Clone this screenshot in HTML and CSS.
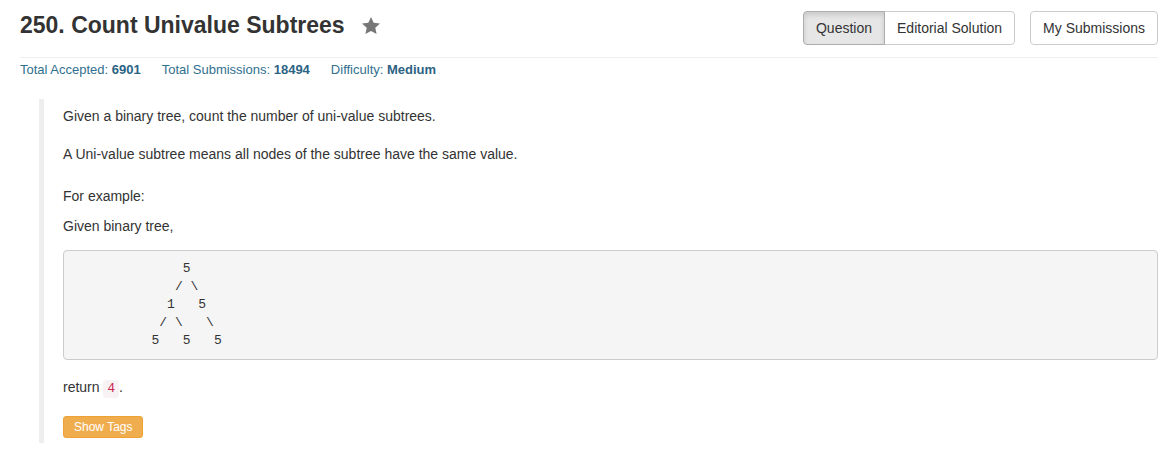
FILE: index.html
```html
<!DOCTYPE html>
<html>
<head>
<meta charset="utf-8">
<title>250. Count Univalue Subtrees</title>
<link rel="stylesheet" href="styles.css">
</head>
<body>
<div class="page">
  <div class="header">
    <h3 class="title">250. Count Univalue Subtrees
      <svg class="star" width="18" height="17" viewBox="1.5 1.5 21 20.2" preserveAspectRatio="none"><polygon points="12,1.5 15.1,8.3 22.5,9.2 17,14.3 18.5,21.7 12,18 5.5,21.7 7,14.3 1.5,9.2 8.9,8.3" fill="#777"/></svg>
    </h3>
    <div class="btn-group">
      <a class="btn active">Question</a><a class="btn">Editorial Solution</a>
    </div>
    <a class="btn solo">My Submissions</a>
  </div>
  <hr class="rule">
  <div class="stats">
    <span class="stat">Total Accepted: <b>6901</b></span>
    <span class="stat">Total Submissions: <b>18494</b></span>
    <span class="stat">Difficulty: <b>Medium</b></span>
  </div>
  <div class="question">
    <p class="p1">Given a binary tree, count the number of uni-value subtrees.</p>
    <p class="p2">A Uni-value subtree means all nodes of the subtree have the same value.</p>
    <p class="p3">For example:</p>
    <p class="p4">Given binary tree,</p>
<pre class="code-block">              5
             / \
            1   5
           / \   \
          5   5   5</pre>
    <p class="ret">return <code class="inline">4</code>.</p>
    <button class="tags-btn">Show Tags</button>
  </div>
</div>
</body>
</html>
```

FILE: styles.css
```css
* { box-sizing: border-box; }
html, body { margin: 0; padding: 0; background: #fff; }
body {
  font-family: "Liberation Sans", Arial, Helvetica, sans-serif;
  font-size: 14px;
  line-height: 20px;
  color: #333;
}
.page {
  padding: 0 13px 0 20px;
}
.header {
  display: flex;
  align-items: flex-start;
  padding-top: 11px;
}
.title {
  margin: 1px auto 0 0;
  font-size: 23px;
  line-height: 26px;
  font-weight: bold;
  color: #333;
  display: flex;
  align-items: center;
}
.star {
  margin-left: 17px;
}
.btn-group {
  display: flex;
}
.btn {
  display: inline-block;
  font-size: 14px;
  line-height: 20px;
  padding: 6px 12px;
  border: 1px solid #ccc;
  background: #fff;
  color: #333;
  border-radius: 4px;
  white-space: nowrap;
  cursor: pointer;
}
.btn-group .btn:first-child {
  border-top-right-radius: 0;
  border-bottom-right-radius: 0;
}
.btn-group .btn:last-child {
  border-top-left-radius: 0;
  border-bottom-left-radius: 0;
  margin-left: -1px;
}
.btn.active {
  background: #e6e6e6;
  border-color: #adadad;
  box-shadow: inset 0 3px 5px rgba(0,0,0,.125);
  position: relative;
  z-index: 1;
}
.btn.solo {
  margin-left: 15px;
}
.rule {
  margin: 12px 0 0 0;
  border: 0;
  border-top: 1px solid #eee;
  height: 0;
}
.stats {
  padding-top: 3px;
  font-size: 13px;
  line-height: 17px;
  color: #31708f;
  display: flex;
  gap: 21px;
}
.stats b { color: #2c6384; }
.question {
  margin: 21px 0 0 19px;
  border-left: 5px solid #eee;
  padding: 7px 0 5px 19px;
}
.question p { margin: 0; }
.p2 { margin-top: 18px !important; }
.p3 { margin-top: 22px !important; }
.p4 { margin-top: 10px !important; }
.code-block {
  margin: 14px 0 0 0;
  padding: 9px 9.5px;
  font-family: "Liberation Mono", "DejaVu Sans Mono", monospace;
  font-size: 13px;
  line-height: 18px;
  color: #333;
  background: #f5f5f5;
  border: 1px solid #ccc;
  border-radius: 4px;
  white-space: pre;
}
.ret { margin-top: 17px !important; }
.inline {
  font-family: "Liberation Mono", "DejaVu Sans Mono", monospace;
  font-size: 12.6px;
  padding: 2px 4px;
  color: #c7254e;
  background: #f9f2f4;
  border-radius: 4px;
}
.tags-btn {
  display: block;
  margin-top: 17px;
  font-family: "Liberation Sans", Arial, sans-serif;
  font-size: 12px;
  line-height: 18px;
  padding: 1px 10px;
  color: #fff;
  background: #f0ad4e;
  border: 1px solid #eea236;
  border-radius: 3px;
  cursor: pointer;
}
```
